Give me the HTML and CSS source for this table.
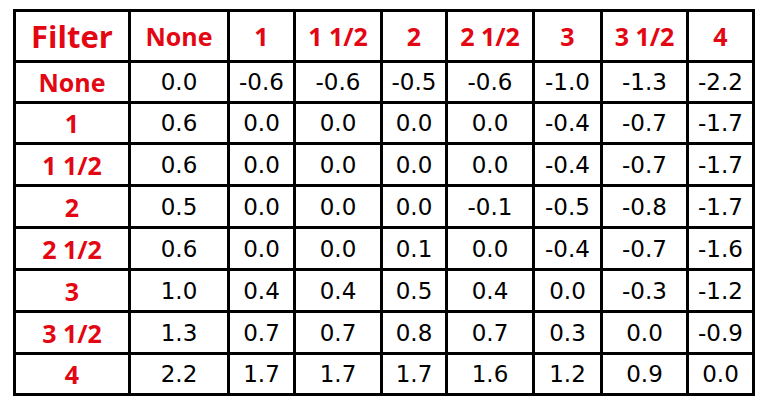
FILE: index.html
```html
<!DOCTYPE html>
<html>
<head>
<meta charset="utf-8">
<link rel="stylesheet" href="styles.css">
</head>
<body>
<div class="grid">
  <div class="c hd first">Filter</div>
  <div class="c hd">None</div>
  <div class="c hd">1</div>
  <div class="c hd">1 1/2</div>
  <div class="c hd">2</div>
  <div class="c hd">2 1/2</div>
  <div class="c hd">3</div>
  <div class="c hd">3 1/2</div>
  <div class="c hd">4</div>

  <div class="c lbl">None</div>
  <div class="c n">0.0</div><div class="c n">-0.6</div><div class="c n">-0.6</div><div class="c n">-0.5</div><div class="c n">-0.6</div><div class="c n">-1.0</div><div class="c n">-1.3</div><div class="c n">-2.2</div>

  <div class="c lbl">1</div>
  <div class="c n">0.6</div><div class="c n">0.0</div><div class="c n">0.0</div><div class="c n">0.0</div><div class="c n">0.0</div><div class="c n">-0.4</div><div class="c n">-0.7</div><div class="c n">-1.7</div>

  <div class="c lbl">1 1/2</div>
  <div class="c n">0.6</div><div class="c n">0.0</div><div class="c n">0.0</div><div class="c n">0.0</div><div class="c n">0.0</div><div class="c n">-0.4</div><div class="c n">-0.7</div><div class="c n">-1.7</div>

  <div class="c lbl">2</div>
  <div class="c n">0.5</div><div class="c n">0.0</div><div class="c n">0.0</div><div class="c n">0.0</div><div class="c n">-0.1</div><div class="c n">-0.5</div><div class="c n">-0.8</div><div class="c n">-1.7</div>

  <div class="c lbl">2 1/2</div>
  <div class="c n">0.6</div><div class="c n">0.0</div><div class="c n">0.0</div><div class="c n">0.1</div><div class="c n">0.0</div><div class="c n">-0.4</div><div class="c n">-0.7</div><div class="c n">-1.6</div>

  <div class="c lbl">3</div>
  <div class="c n">1.0</div><div class="c n">0.4</div><div class="c n">0.4</div><div class="c n">0.5</div><div class="c n">0.4</div><div class="c n">0.0</div><div class="c n">-0.3</div><div class="c n">-1.2</div>

  <div class="c lbl">3 1/2</div>
  <div class="c n">1.3</div><div class="c n">0.7</div><div class="c n">0.7</div><div class="c n">0.8</div><div class="c n">0.7</div><div class="c n">0.3</div><div class="c n">0.0</div><div class="c n">-0.9</div>

  <div class="c lbl">4</div>
  <div class="c n">2.2</div><div class="c n">1.7</div><div class="c n">1.7</div><div class="c n">1.7</div><div class="c n">1.6</div><div class="c n">1.2</div><div class="c n">0.9</div><div class="c n">0.0</div>
</div>
</body>
</html>
```

FILE: styles.css
```css
html, body {
  margin: 0;
  padding: 0;
  background: #fff;
}

.grid {
  display: inline-grid;
  margin: 9px 0 0 13px;
  background: #000;
  padding: 3px;
  gap: 3px;
  grid-template-columns: 112px 96px 63px 84px 62px 84px 65px 83px 63px;
  grid-template-rows: 48px 38px 38px 39px 39px 39px 39px 39px 38px;
}

.c {
  background: #fff;
  display: flex;
  align-items: center;
  justify-content: center;
  white-space: nowrap;
}

.hd, .lbl {
  font-family: "Open Sans", "Liberation Sans", sans-serif;
  font-weight: 700;
  color: #e30613;
  font-size: 25px;
}

.hd.first {
  font-size: 31px;
}

.n {
  font-family: "DejaVu Sans", sans-serif;
  font-weight: 400;
  font-size: 23px;
  color: #000;
}
```
